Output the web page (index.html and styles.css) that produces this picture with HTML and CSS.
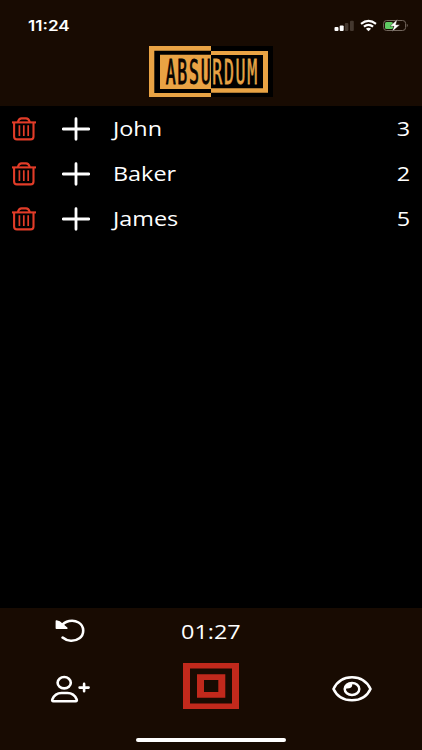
FILE: index.html
```html
<!DOCTYPE html>
<html lang="en">
<head>
  <meta charset="UTF-8" />
  <meta name="viewport" content="width=device-width, initial-scale=1.0"/>
  <title>Absurdum</title>
  <link rel="stylesheet" href="styles.css">
</head>
<body>

  <header>
    <div class="status">
      <span class="clock">11:24</span>
      <svg class="signals" width="76" height="14" viewBox="0 0 76 14">
        <!-- signal bars -->
        <rect x="1.5" y="8" width="4" height="4" rx="1" fill="#fff"/>
        <rect x="6.7" y="6.5" width="4" height="5.5" rx="1" fill="#fff"/>
        <rect x="11.8" y="4" width="3.6" height="8" rx="1" fill="#44382f"/>
        <rect x="17" y="1.7" width="3.8" height="10.3" rx="1" fill="#44382f"/>
        <!-- wifi -->
        <g fill="none" stroke="#fff" stroke-width="2.1">
          <path d="M28 4.9Q35.5 -1.1 43 4.9"/>
          <path d="M30.9 7.7Q35.5 4.1 40.1 7.7"/>
        </g>
        <path d="M32.9 9.7Q35.5 7.8 38.1 9.7L35.5 12.3Z" fill="#fff"/>
        <!-- battery -->
        <rect x="50.6" y="1.5" width="22" height="10" rx="3" fill="none" stroke="#75695f"/>
        <path d="M73.8 4.8q2 1.7 0 3.4z" fill="#75695f"/>
        <rect x="52" y="3" width="8" height="7" rx="1.5" fill="#5fca63"/>
        <path d="M64.4 .2L57 7.3H61L59 12.8L67 5.7H62.8Z" fill="#fff" stroke="#180b02" stroke-width=".4"/>
      </svg>
    </div>
    <svg class="logo" width="124" height="51" viewBox="0 0 124 51">
      <defs>
        <linearGradient id="split" gradientUnits="userSpaceOnUse" x1="0" y1="0" x2="248" y2="0">
          <stop offset="50%" stop-color="#080300"/>
          <stop offset="50%" stop-color="#e9a344"/>
        </linearGradient>
      </defs>
      <path fill="#e9a344" d="M0 0H62V51H0z"/>
      <path fill="#000" d="M5.3 4.7H62V47H5.3z"/>
      <path fill="#e9a344" d="M11 8.8H62V43H11z"/>
      <path fill="#000" d="M62 0H124V51H62z"/>
      <path fill="#e9a344" d="M62 5H119V46.7H62z"/>
      <path fill="#000" d="M62 9H114V42.2H62z"/>
      <text class="logo-text" transform="scale(.5 1)" x="33.5" y="37.8" fill="url(#split)" stroke="url(#split)">ABSURDUM</text>
    </svg>
  </header>

  <!-- shared icons for the player rows -->
  <svg width="0" height="0" class="defs">
    <symbol id="trash" viewBox="0 0 24 24">
      <g fill="none" stroke="#e23c28" stroke-width="2.1">
        <path d="M0 5.4H24"/>
        <path d="M2.1 5.4V19.5Q2.1 22.4 5 22.4H18.6Q21.5 22.4 21.5 19.5V5.4"/>
        <path d="M5.8 5Q7 1.4 9.5 1.4H14.1Q16.6 1.4 17.8 5"/>
        <path d="M7.4 8.3V19M11.8 8.3V19M16.2 8.3V19" stroke-width="1.7"/>
      </g>
    </symbol>
    <symbol id="plus" viewBox="0 0 28 24">
      <path d="M1.2 12H26.8M14 1.7V22.3" stroke="#fff" stroke-width="2.8" stroke-linecap="round"/>
    </symbol>
  </svg>

  <ul class="players">
    <li>
      <svg class="trash"><use href="#trash"/></svg>
      <svg class="plus"><use href="#plus"/></svg>
      <span class="name">John</span>
      <span class="score">3</span>
    </li>
    <li>
      <svg class="trash"><use href="#trash"/></svg>
      <svg class="plus"><use href="#plus"/></svg>
      <span class="name">Baker</span>
      <span class="score">2</span>
    </li>
    <li>
      <svg class="trash"><use href="#trash"/></svg>
      <svg class="plus"><use href="#plus"/></svg>
      <span class="name">James</span>
      <span class="score">5</span>
    </li>
  </ul>

  <footer>
    <div class="controls">
      <svg width="30" height="24" viewBox="0 0 30 24">
        <path d="M6 7.5C10 1.6 18 .2 23.6 3.5C29.6 7.2 29.6 15.3 24.4 19.2C19.4 22.9 12 22.4 7.6 18.6" fill="none" stroke="#fff" stroke-width="2.6" stroke-linecap="round"/>
        <path d="M1.4 2L4.6 3L11.8 9.2H1.4Z" fill="#fff" stroke="#fff" stroke-width="1.6" stroke-linejoin="round"/>
      </svg>
      <span class="timer">01:27</span>
    </div>
    <div class="controls main">
      <svg class="side" width="40" height="28" viewBox="0 0 40 28">
        <g fill="none" stroke="#fff" stroke-width="2.6" stroke-linecap="round" stroke-linejoin="round">
          <ellipse cx="14.2" cy="7.7" rx="6.6" ry="5.7"/>
          <path d="M3.4 26.2H25.6Q27.4 26.2 26.6 24.3C24.9 20.2 21.5 18 17.5 18H11.5C7.5 18 4.1 20.2 2.4 24.3Q1.6 26.2 3.4 26.2Z"/>
          <path d="M29.6 12.6H38.6M34.1 8.9V16.3"/>
        </g>
      </svg>
      <svg width="56" height="46" viewBox="0 0 56 46">
        <path fill="#c1291c" fill-rule="evenodd" d="M0 0H56V46H0zM7 5.4V40.5H49V5.4zM14 11.3H42.3V34.7H14zM21 17V29H35.3V17z"/>
      </svg>
      <svg class="side" width="40" height="28" viewBox="0 0 40 28">
        <path d="M1.5 14C5 6.5 12 2.2 20 2.2S35 6.5 38.5 14C35 21.5 28 25.3 20 25.3S5 21.5 1.5 14Z" fill="none" stroke="#fff" stroke-width="2.6" stroke-linejoin="round"/>
        <ellipse cx="20" cy="14" rx="7.3" ry="6.1" fill="none" stroke="#fff" stroke-width="2.5"/>
        <path d="M13 14L14 10L19 8L20.3 9.2Q20.5 13.5 15 13.5Z" fill="#fff"/>
      </svg>
    </div>
    <div class="home-bar"></div>
  </footer>

</body>
</html>
```
FILE: styles.css
```css
* {
  box-sizing: border-box;
}
body {
  margin: 0;
  height: 750px;
  display: flex;
  flex-direction: column;
  background: #000;
  color: #fff;
  font-family: "Open Sans", "Noto Sans", sans-serif;
  overflow: hidden;
}
svg {
  display: block;
}
.defs {
  position: absolute;
}
header {
  height: 106px;
  background: #180b02;
}
.status {
  height: 46px;
  padding: 5px 13px 0 28px;
  display: flex;
  align-items: center;
  justify-content: space-between;
}
.clock {
  font: 600 14px Inter, sans-serif;
  transform: scaleX(1.22);
  transform-origin: left;
}
.logo {
  margin-left: 149px;
}
.logo-text {
  font: 33px "DejaVu Sans Mono", monospace;
  letter-spacing: 3.4px;
  stroke-width: .8px;
}
.players {
  flex: 1;
  list-style: none;
  margin: 0;
  padding: 0;
}
.players li {
  height: 45px;
  display: flex;
  align-items: center;
  padding: 0 12px;
  font-size: 19.5px;
}
.trash {
  width: 24px;
  height: 24px;
}
.plus {
  width: 28px;
  height: 24px;
  margin: 0 23px 0 26px;
}
.name, .score, .timer {
  display: inline-block;
  transform: scaleX(1.2);
  transform-origin: left;
}
.score {
  margin-left: auto;
  transform-origin: right;
}
footer {
  height: 142px;
  background: #180b02;
}
.controls {
  display: grid;
  grid-template-columns: repeat(3, 1fr);
  height: 46px;
  place-items: center;
}
.timer {
  font-size: 19.5px;
  transform-origin: center;
}
.main {
  height: 64px;
}
.side {
  margin-top: 6px;
}
.home-bar {
  width: 150px;
  height: 4px;
  margin: 20px auto 0;
  border-radius: 2px;
  background: #fff;
}
```
